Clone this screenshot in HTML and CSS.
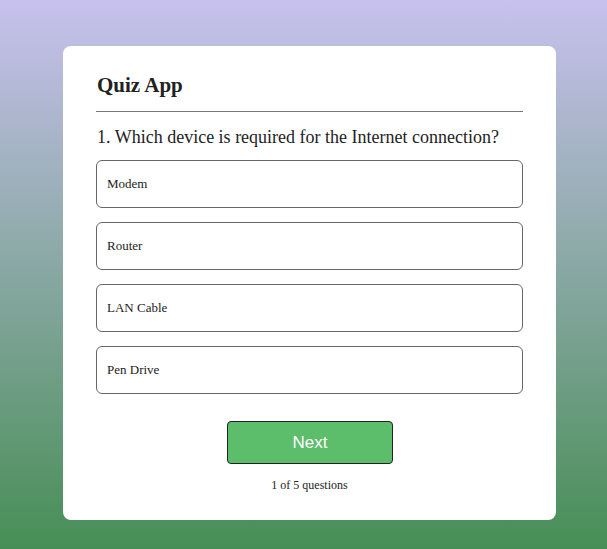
FILE: index.html
```html
<!DOCTYPE html>
<html>
<head>
<meta charset="utf-8">
<link rel="stylesheet" href="styles.css">
</head>
<body>
<div class="page">
  <div class="card">
    <h1 class="title">Quiz App</h1>
    <hr class="rule">
    <h2 class="question">1. Which device is required for the Internet connection?</h2>
    <div class="options">
      <div class="option">Modem</div>
      <div class="option">Router</div>
      <div class="option">LAN Cable</div>
      <div class="option">Pen Drive</div>
    </div>
    <div class="footer">
      <button class="next">Next</button>
      <div class="count">1 of 5 questions</div>
    </div>
  </div>
</div>
</body>
</html>
```
FILE: styles.css
```css
html, body {
  margin: 0;
  padding: 0;
  height: 100%;
}
body {
  background: linear-gradient(to bottom, #c8c1ee 0%, #478e56 100%);
  font-family: "Liberation Serif", "Times New Roman", serif;
  color: #222;
}
.page {
  padding-top: 46px;
  padding-left: 63px;
}
.card {
  box-sizing: border-box;
  width: 493px;
  height: 474px;
  background: #fff;
  border-radius: 8px;
  padding: 26px 33px 0 33px;
}
.title {
  margin: 0;
  font-size: 21px;
  font-weight: bold;
  line-height: 26px;
  padding-left: 1px;
}
.rule {
  margin: 13px 0 0 0;
  border: none;
  border-top: 1px solid #777;
  height: 0;
}
.question {
  margin: 15px 0 0 0;
  font-size: 18px;
  font-weight: normal;
  line-height: 20px;
  padding-left: 1px;
}
.options {
  display: flex;
  flex-direction: column;
  gap: 14px;
  margin-top: 13px;
}
.option {
  box-sizing: border-box;
  height: 48px;
  border: 1px solid #666;
  border-radius: 6px;
  padding-left: 10px;
  display: flex;
  align-items: center;
  font-size: 13px;
}
.footer {
  display: flex;
  flex-direction: column;
  align-items: center;
  margin-top: 27px;
}
.next {
  width: 166px;
  height: 43px;
  background: #5cbd6a;
  border: 1px solid #222;
  border-radius: 4px;
  color: #fff;
  font-family: "Liberation Sans", Arial, sans-serif;
  font-size: 17px;
  margin-left: 1px;
}
.count {
  margin-top: 14px;
  font-size: 12px;
  line-height: 14px;
}
```
